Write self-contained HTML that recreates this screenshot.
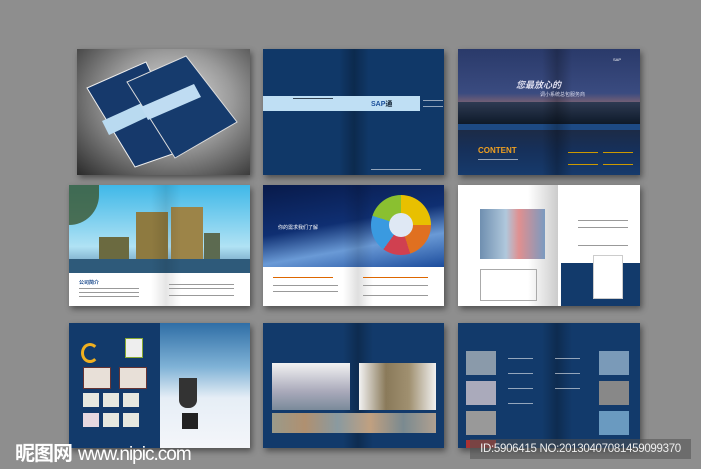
<!DOCTYPE html>
<html><head><meta charset="utf-8"><style>
body{margin:0;width:701px;height:469px;background:#8e8e8e;position:relative;overflow:hidden;font-family:"Liberation Sans","Noto Sans CJK SC",sans-serif}
.p{position:absolute;box-shadow:2px 3px 6px rgba(0,0,0,.45)}
.nv{background:#123a6b}
.a{position:absolute}
.fold{position:absolute;top:0;bottom:0;width:30px;background:linear-gradient(90deg,rgba(0,0,0,0),rgba(0,0,0,.25),rgba(0,0,0,0))}
.t{position:absolute;height:1px;background:rgba(255,255,255,.55)}
.g{position:absolute;height:1px;background:#999}
</style></head><body>

<div class="p" style="left:77px;top:49px;width:173px;height:126px;background:radial-gradient(ellipse at 55% 40%,#e0e0e0 0%,#9a9a9a 45%,#2a2a2a 100%)">
<svg width="173" height="126" style="position:absolute;left:0;top:0">
<polygon points="10,39 69,13 110,100 58,118" fill="#16396b" stroke="#eee" stroke-width="1"/>
<polygon points="25,72 78,48 85,61 32,86" fill="#b9daf0"/>
<polygon points="50,33 109,7 160,73 98,109" fill="#163b6d" stroke="#ddd" stroke-width="1"/>
<polygon points="64,58 117,35 124,48 71,71" fill="#bfdcf2"/>
</svg></div>

<div class="p nv" style="left:263px;top:49px;width:181px;height:126px;background:#103868">
<div class="fold" style="left:76px"></div>
<div class="a" style="left:0;top:47px;width:157px;height:15px;background:#bfdff4"></div>
<div class="a" style="left:108px;top:50px;font-size:7px;font-weight:bold;color:#1b4f9a">SAP<span style="color:#123">通</span></div>
<div class="t" style="left:160px;top:51px;width:20px"></div><div class="t" style="left:160px;top:57px;width:20px"></div>
<div class="a" style="left:30px;top:49px;width:40px;height:1px;background:#345"></div>
<div class="t" style="left:108px;top:120px;width:50px"></div>
</div>

<div class="p" style="left:458px;top:49px;width:182px;height:126px;background:linear-gradient(#2a3a6a 0%,#3a4b80 35%,#c07a66 52%,#1d2a44 62%,#16305a 80%,#163a6c 100%)">
<div class="a" style="left:0;top:53px;width:182px;height:22px;background:linear-gradient(#2e3a52,#0e1a2a)"></div>
<div class="a" style="left:0;top:75px;width:182px;height:6px;background:#1d4a84"></div>
<div class="fold" style="left:84px"></div>
<div class="a" style="left:58px;top:29px;font-size:9px;font-weight:bold;color:#dde;font-style:italic">您最放心的</div>
<div class="a" style="left:82px;top:42px;font-size:5px;color:#dde">调小系统总包服务商</div>
<div class="a" style="left:20px;top:97px;font-size:8px;font-weight:bold;color:#f0a020">CONTENT</div>
<div class="t" style="left:20px;top:110px;width:40px"></div>
<div class="a" style="left:155px;top:8px;font-size:4px;color:#fff">SAP</div>
<div class="a" style="left:110px;top:103px;width:30px;height:1px;background:#c90"></div>
<div class="a" style="left:145px;top:103px;width:30px;height:1px;background:#c90"></div>
<div class="a" style="left:110px;top:115px;width:30px;height:1px;background:#c90"></div>
<div class="a" style="left:145px;top:115px;width:30px;height:1px;background:#c90"></div>
</div>

<div class="p" style="left:69px;top:185px;width:181px;height:121px;background:#fff">
<div class="a" style="left:0;top:0;width:181px;height:88px;background:linear-gradient(#3fb8e8,#b0e2f4 70%,#5a8ab0)"></div>
<div class="a" style="left:0;top:0;width:30px;height:40px;background:#3e5d3a;border-radius:0 0 30px 0;opacity:.85"></div>
<div class="a" style="left:30px;top:52px;width:30px;height:26px;background:#6b6a40"></div>
<div class="a" style="left:67px;top:27px;width:32px;height:52px;background:#8e7a40"></div>
<div class="a" style="left:102px;top:22px;width:32px;height:57px;background:#9c8448"></div>
<div class="a" style="left:135px;top:48px;width:16px;height:30px;background:#5c6a50"></div>
<div class="a" style="left:0;top:74px;width:181px;height:14px;background:#2e5a7a"></div>
<div class="fold" style="left:82px;opacity:.4"></div>
<div class="a" style="left:10px;top:94px;font-size:5px;color:#1a4a8c;font-weight:bold">公司简介</div>
<div class="g" style="left:10px;top:103px;width:60px"></div><div class="g" style="left:10px;top:107px;width:60px"></div><div class="g" style="left:10px;top:111px;width:60px"></div>
<div class="g" style="left:100px;top:99px;width:65px"></div><div class="g" style="left:100px;top:103px;width:65px"></div><div class="g" style="left:100px;top:110px;width:65px"></div>
</div>

<div class="p" style="left:263px;top:185px;width:181px;height:121px;background:#fff">
<div class="a" style="left:0;top:0;width:181px;height:82px;background:linear-gradient(170deg,#081a4a 0%,#0f2f72 45%,#6a9ad6 70%,#1c4c9c 100%)"></div>
<div class="fold" style="left:80px;opacity:.5"></div>
<div class="a" style="left:108px;top:10px;width:60px;height:60px;border-radius:50%;background:conic-gradient(#e8c000 0 25%,#e07020 0 45%,#d04050 0 60%,#3a9ae0 0 80%,#8ac030 0 100%)"></div>
<div class="a" style="left:126px;top:28px;width:24px;height:24px;border-radius:50%;background:#dfe8f4"></div>
<div class="a" style="left:15px;top:39px;font-size:5px;color:#fff">你的需求我们了解</div>
<div class="g" style="left:10px;top:92px;width:60px;background:#d60"></div><div class="g" style="left:10px;top:100px;width:65px"></div><div class="g" style="left:10px;top:106px;width:65px"></div>
<div class="g" style="left:100px;top:92px;width:65px;background:#d60"></div><div class="g" style="left:100px;top:100px;width:65px"></div><div class="g" style="left:100px;top:110px;width:65px"></div>
</div>

<div class="p" style="left:458px;top:185px;width:182px;height:121px;background:#fff">
<div class="a" style="left:0;top:0;width:100px;height:121px;background:linear-gradient(90deg,#fff 70%,#ccc)"></div>
<div class="a" style="left:22px;top:24px;width:65px;height:50px;background:linear-gradient(90deg,#6f8fb0,#b0c8dc 40%,#e09090 60%,#7a9ac0)"></div>
<div class="a" style="left:22px;top:84px;width:55px;height:30px;border:1px solid #aaa"></div>
<div class="a" style="left:103px;top:78px;width:79px;height:43px;background:#123a6b"></div>
<div class="a" style="left:107px;top:0;width:75px;height:78px;background:#fff"></div>
<div class="a" style="left:135px;top:70px;width:28px;height:42px;background:#fff;border:1px solid #ccc"></div>
<div class="g" style="left:120px;top:35px;width:50px"></div><div class="g" style="left:120px;top:42px;width:50px"></div><div class="g" style="left:120px;top:60px;width:50px"></div>
</div>

<div class="p" style="left:69px;top:323px;width:181px;height:125px;background:#123a6b">
<div class="a" style="left:91px;top:0;width:90px;height:125px;background:linear-gradient(#2f6ea6 0%,#7fb2d6 35%,#e6eef6 60%,#f4f6fa 100%)"></div>
<div class="a" style="left:12px;top:20px;width:12px;height:14px;border:3px solid #f0b020;border-right-color:transparent;border-radius:50%"></div>
<div class="a" style="left:56px;top:15px;width:16px;height:18px;background:#eee;border:1px solid #8a3"></div>
<div class="a" style="left:14px;top:44px;width:26px;height:20px;background:#e8e0d8;border:1px solid #633"></div>
<div class="a" style="left:50px;top:44px;width:26px;height:20px;background:#e8e0d8;border:1px solid #633"></div>
<div class="a" style="left:14px;top:70px;width:16px;height:14px;background:#e6e8e0"></div><div class="a" style="left:34px;top:70px;width:16px;height:14px;background:#e6e8e0"></div><div class="a" style="left:54px;top:70px;width:16px;height:14px;background:#e6e8e0"></div>
<div class="a" style="left:14px;top:90px;width:16px;height:14px;background:#e6d8e0"></div><div class="a" style="left:34px;top:90px;width:16px;height:14px;background:#e6e8e0"></div><div class="a" style="left:54px;top:90px;width:16px;height:14px;background:#e6e8e0"></div>
<div class="a" style="left:110px;top:55px;width:18px;height:30px;border-radius:0 0 8px 8px;background:#333"></div>
<div class="a" style="left:113px;top:90px;width:16px;height:16px;background:#222"></div>
</div>

<div class="p" style="left:263px;top:323px;width:181px;height:125px;background:#123a6b">
<div class="fold" style="left:80px"></div>
</div>
<div class="a" style="left:272px;top:363px;width:78px;height:47px;background:linear-gradient(#f2f2f2,#aab 60%,#7a8a9a)"></div>
<div class="a" style="left:359px;top:363px;width:77px;height:47px;background:linear-gradient(90deg,#f2f2f2,#8a7a5a 35%,#a09070 65%,#f0f0f0)"></div>
<div class="a" style="left:272px;top:413px;width:164px;height:20px;background:linear-gradient(90deg,#9a9a8a,#b09070 20%,#8a9aa0 40%,#c0a080 60%,#7a8a90 80%,#b0a090)"></div>

<div class="p" style="left:458px;top:323px;width:182px;height:125px;background:#123a6b">
<div class="fold" style="left:84px"></div>
<div class="a" style="left:8px;top:28px;width:30px;height:24px;background:#8a9aaa"></div>
<div class="a" style="left:8px;top:58px;width:30px;height:24px;background:#aab"></div>
<div class="a" style="left:8px;top:88px;width:30px;height:24px;background:#999"></div>
<div class="a" style="left:8px;top:117px;width:30px;height:8px;background:#a33"></div>
<div class="a" style="left:141px;top:28px;width:30px;height:24px;background:#7a9ab8"></div>
<div class="a" style="left:141px;top:58px;width:30px;height:24px;background:#888"></div>
<div class="a" style="left:141px;top:88px;width:30px;height:24px;background:#6a9ac0"></div>
<div class="t" style="left:50px;top:35px;width:25px"></div><div class="t" style="left:50px;top:50px;width:25px"></div><div class="t" style="left:50px;top:65px;width:25px"></div><div class="t" style="left:50px;top:80px;width:25px"></div>
<div class="t" style="left:97px;top:35px;width:25px"></div><div class="t" style="left:97px;top:50px;width:25px"></div><div class="t" style="left:97px;top:65px;width:25px"></div>
</div>

<div class="a" style="left:15px;top:437px;font-size:20px;color:#fff;font-weight:bold;letter-spacing:-1px;white-space:nowrap">昵图网<span style="font-size:19px;font-weight:normal;margin-left:6px">www.nipic.com</span></div>
<div class="a" style="left:470px;top:439px;width:221px;height:20px;background:rgba(80,80,80,.55);color:#eee;font-size:11.5px;line-height:20px;text-align:center;white-space:nowrap;letter-spacing:-0.3px">ID:5906415 NO:20130407081459099370</div>
</body></html>
